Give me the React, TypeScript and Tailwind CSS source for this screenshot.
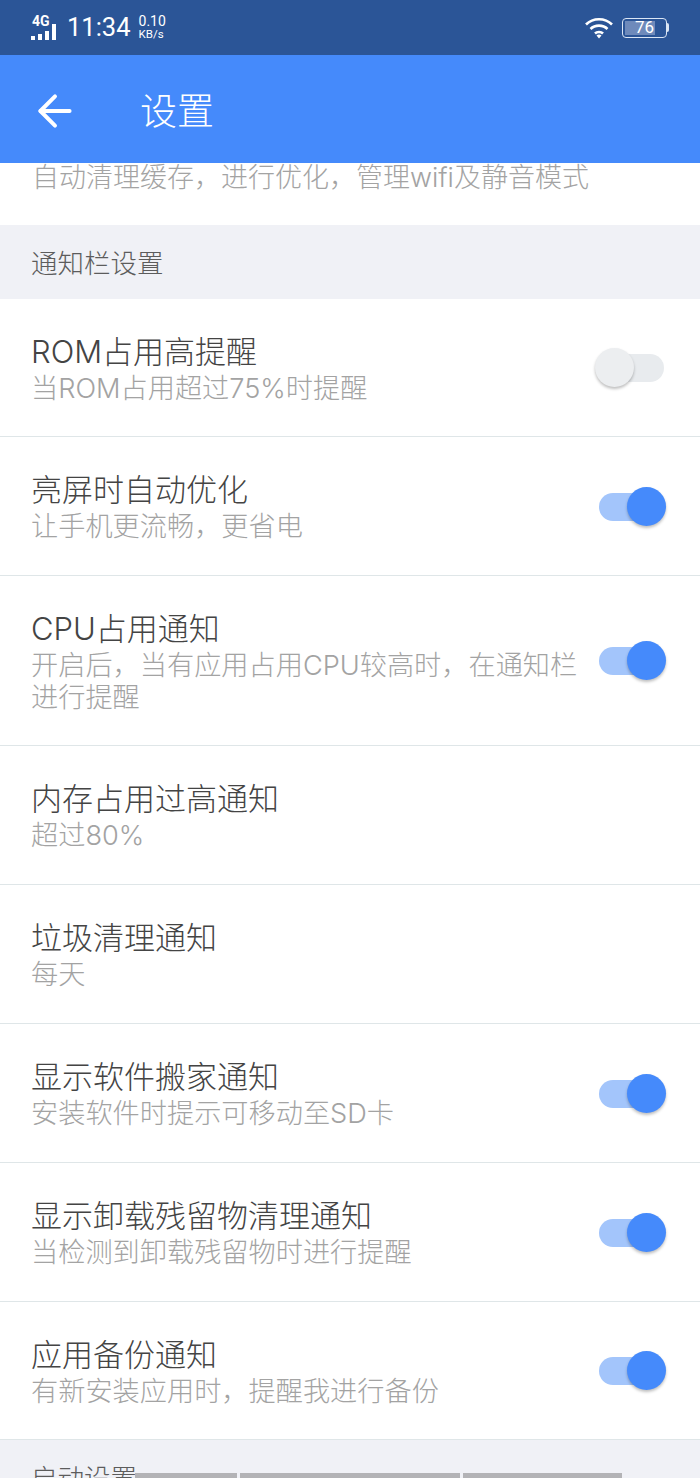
import { ArrowLeft } from "lucide-react";

const font = "font-['Inter','Noto_Sans_CJK_SC',sans-serif]";

interface RowProps {
  title: string;
  desc: string;
  toggle?: "on" | "off";
  height: string;
}

const Toggle = ({ on }: { on: boolean }) => (
  <div className="relative mt-[1px] h-[28px] w-[68px] shrink-0">
    <div className={`absolute left-[2px] top-0 h-[28px] w-[65px] rounded-full ${on ? "bg-[#a3c5fb]" : "bg-[#e8ebee]"}`} />
    <div
      className={`absolute top-[-6px] h-[39px] w-[39px] rounded-full shadow-[0_2px_3px_rgba(0,0,0,0.25)] ${
        on ? "left-[30px] bg-[#458afb]" : "left-[-2px] bg-[#eceef0]"
      }`}
    />
  </div>
);

const Row = ({ title, desc, toggle, height }: RowProps) => (
  <div className={`flex items-center border-b border-[#dfe6e8] bg-white pl-[31px] pr-[35px] ${height}`}>
    <div className="min-w-0 flex-1 pr-[8px] pt-[3px]">
      <div className="text-[31px] font-light leading-[36px] text-[#444444]">{title}</div>
      <div className="mt-[3px] text-[27.2px] font-light leading-[32px] text-[#a3a3a3]">{desc}</div>
    </div>
    {toggle && <Toggle on={toggle === "on"} />}
  </div>
);

const SectionHead = ({ label }: { label: string }) => (
  <div className="flex h-[74px] items-center bg-[#f0f1f6] pl-[31px] pt-[4px] text-[26.5px] font-light text-[#5c5c5c]">{label}</div>
);

const WifiIcon = () => (
  <svg width="30" height="24" viewBox="0 0 30 24" fill="none" stroke="white" strokeWidth="2.6">
    <path d="M2 8.5 C9 1.5 21 1.5 28 8.5" />
    <path d="M6.5 13 C11 8.5 19 8.5 23.5 13" />
    <path d="M11 17.5 C13 15.5 17 15.5 19 17.5" />
    <path d="M12.5 19.5 L15 22.5 L17.5 19.5 C16 18.3 14 18.3 12.5 19.5 Z" fill="white" stroke="none" />
  </svg>
);

const Battery = () => (
  <div className="flex items-center">
    <div className="relative h-[20px] w-[45px] overflow-hidden rounded-[4px] border-[1.5px] border-[#dbe6f5] p-[2px]">
      <div className="h-full w-[76%] bg-[#6e8abb]" />
      <div className="absolute inset-0 flex items-center justify-center font-['Roboto',sans-serif] text-[17px] leading-none text-white">76</div>
    </div>
    <div className="h-[9px] w-[2px] rounded-r-sm bg-[#dbe6f5]" />
  </div>
);

const Signal = () => (
  <div className="relative h-[24px] w-[28px] text-white">
    <div className="absolute left-[1px] top-[-2px] font-['Roboto',sans-serif] text-[14px] font-bold leading-[14px]">4G</div>
    <div className="absolute bottom-0 left-0 flex items-end gap-[3px]">
      <div className="h-[4px] w-[4px] bg-white" />
      <div className="h-[6px] w-[4px] bg-white" />
      <div className="h-[9px] w-[4px] bg-white" />
      <div className="h-[16px] w-[4px] bg-white" />
    </div>
  </div>
);

export default function App() {
  return (
    <div className={`relative h-[1478px] w-[700px] overflow-hidden bg-white ${font}`}>
      <div className="flex h-[55px] items-center bg-[#2b5597] pl-[31px] pr-[31px] font-['Roboto',sans-serif] text-white">
        <Signal />
        <div className="ml-[8px] text-[25.5px] leading-none">11:34</div>
        <div className="ml-[8px]">
          <div className="text-[14px] leading-[13px]">0.10</div>
          <div className="text-[11.5px] leading-[13px]">KB/s</div>
        </div>
        <div className="ml-auto flex items-center gap-[8px]">
          <WifiIcon />
          <Battery />
        </div>
      </div>

      <div className="flex h-[108px] items-center bg-[#458afb] pl-[30px] pt-[4px] text-white">
        <ArrowLeft size={50} strokeWidth={1.9} />
        <div className="ml-[60px] text-[37px] font-light leading-none">设置</div>
      </div>

      <div className="h-[62px] bg-white pl-[32px] text-[27px] font-light leading-[30px] text-[#a3a3a3]">
        自动清理缓存，进行优化，管理wifi及静音模式
      </div>

      <SectionHead label="通知栏设置" />

      <Row title="ROM占用高提醒" desc="当ROM占用超过75%时提醒" toggle="off" height="h-[138px]" />
      <Row title="亮屏时自动优化" desc="让手机更流畅，更省电" toggle="on" height="h-[139px]" />
      <Row title="CPU占用通知" desc="开启后，当有应用占用CPU较高时，在通知栏进行提醒" toggle="on" height="h-[170px]" />
      <Row title="内存占用过高通知" desc="超过80%" height="h-[139px]" />
      <Row title="垃圾清理通知" desc="每天" height="h-[139px]" />
      <Row title="显示软件搬家通知" desc="安装软件时提示可移动至SD卡" toggle="on" height="h-[139px]" />
      <Row title="显示卸载残留物清理通知" desc="当检测到卸载残留物时进行提醒" toggle="on" height="h-[139px]" />
      <Row title="应用备份通知" desc="有新安装应用时，提醒我进行备份" toggle="on" height="h-[138px]" />

      <div className="h-[74px] bg-[#f0f1f6] pl-[31px] pt-[23px] text-[26.5px] font-light leading-[30px] text-[#5c5c5c]">启动设置</div>

      {/* nav bar peeking in at the bottom edge */}
      <div className="absolute bottom-0 left-[135px] flex h-[5px] gap-[3px]">
        <div className="h-full w-[102px] bg-[#b3b3b6]" />
        <div className="h-full w-[220px] bg-[#b3b3b6]" />
        <div className="h-full w-[159px] bg-[#b3b3b6]" />
      </div>
    </div>
  );
}
